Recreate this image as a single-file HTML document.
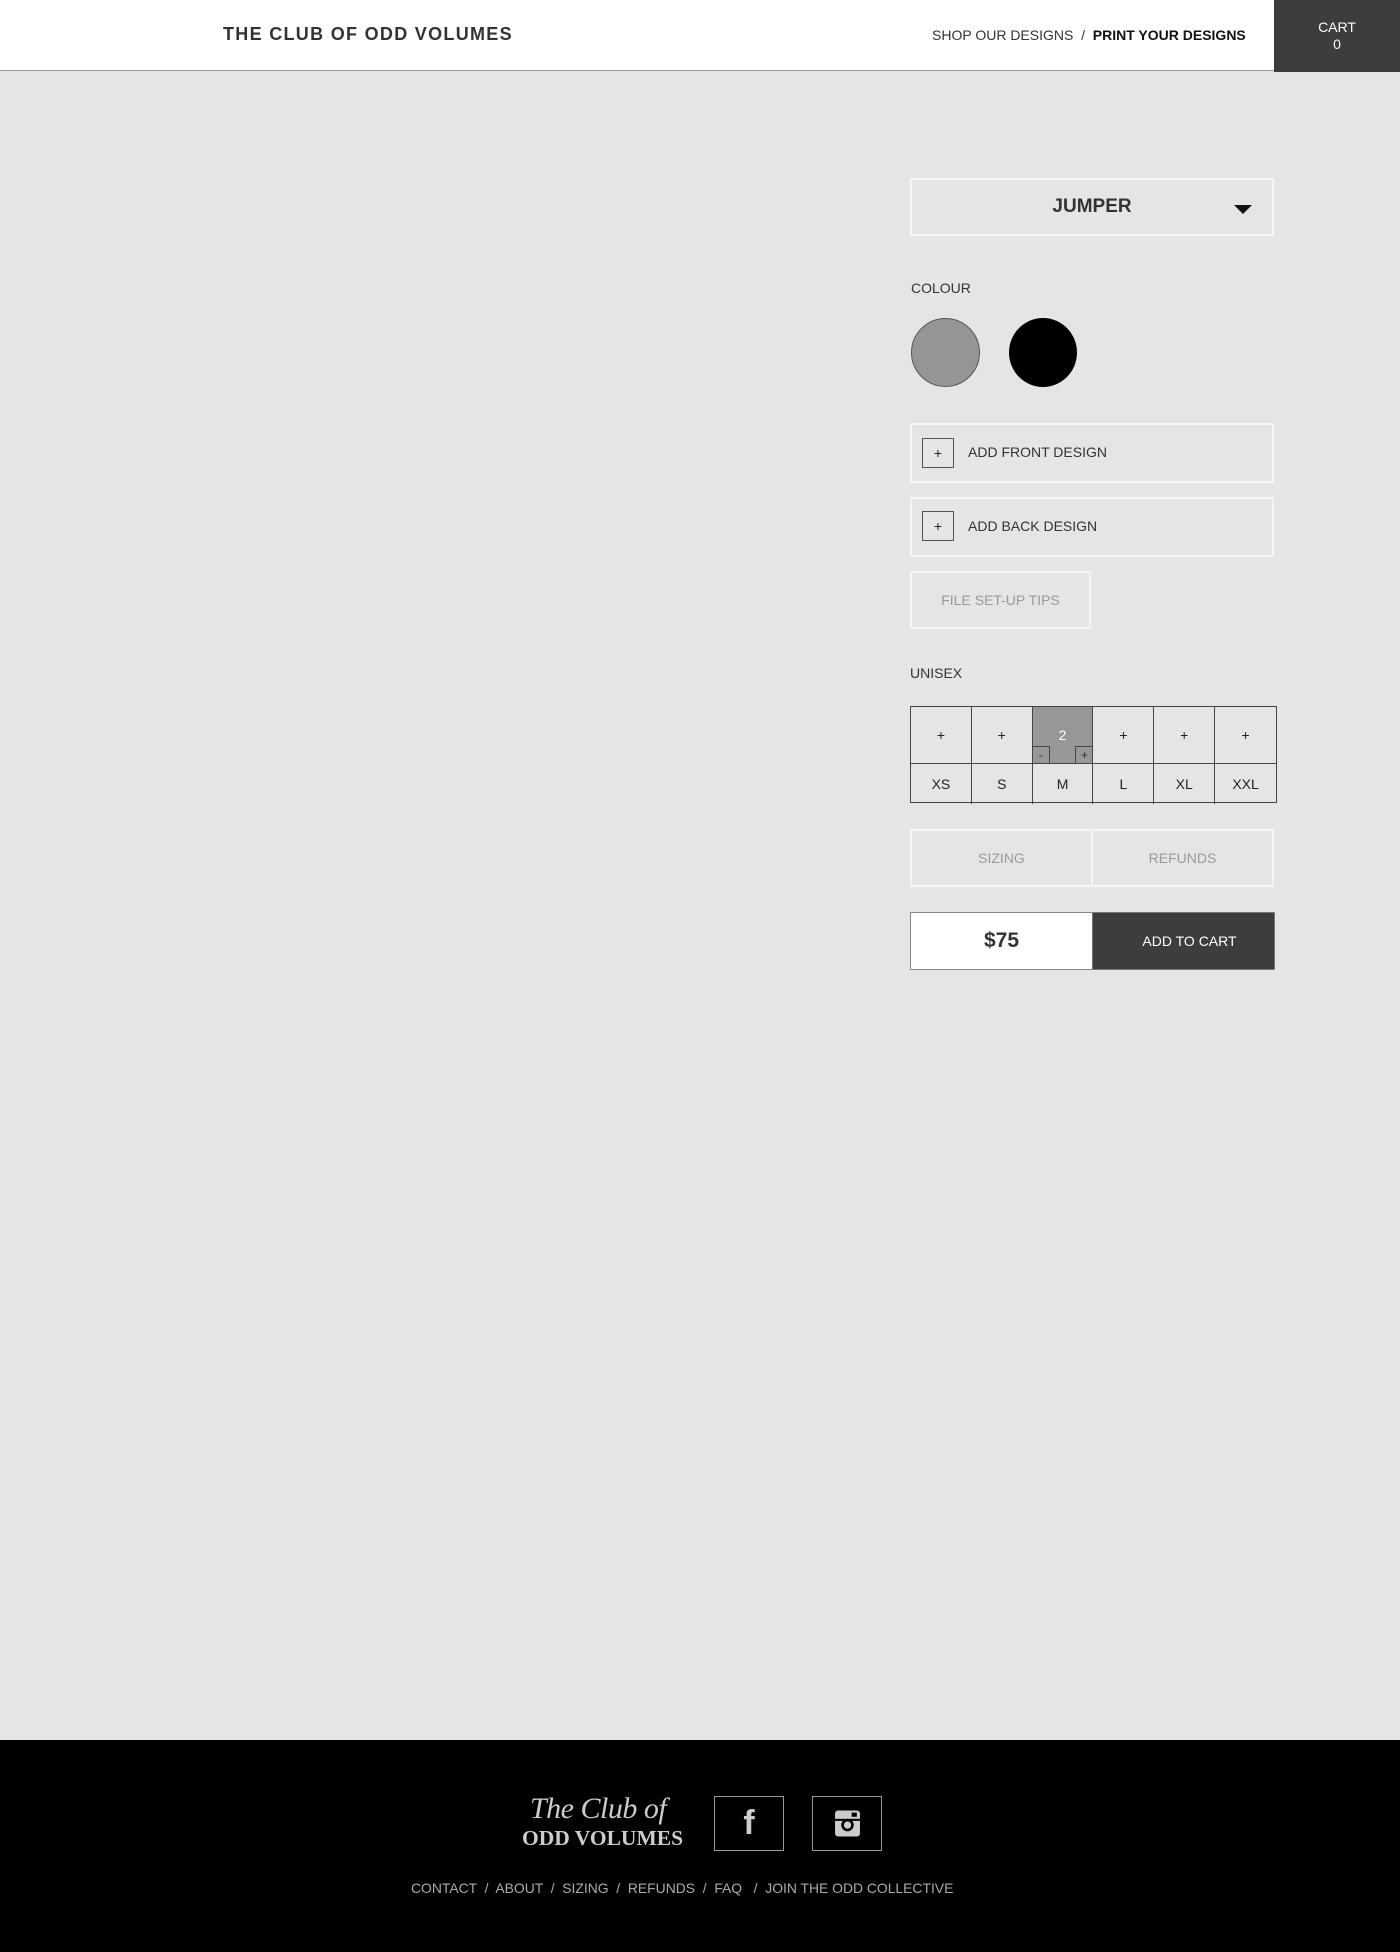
<!DOCTYPE html>
<html><head><meta charset="utf-8"><style>
*{box-sizing:border-box;margin:0;padding:0}
body{width:1400px;height:1952px;background:#e5e5e5;font-family:"Liberation Sans",Arial,sans-serif;position:relative;overflow:hidden;color:#222}
.a{position:absolute}
.hdr{left:0;top:0;width:1400px;height:71px;background:#fff;border-bottom:1px solid #999}
.box{border:2px solid #f5f5f5}
.c{display:flex;align-items:center;justify-content:center}
.grid{left:910px;top:706px;width:367px;height:97px;border:1px solid #444;display:grid;grid-template-columns:repeat(6,1fr);grid-template-rows:57px 40px}
.grid div{border-right:1px solid #444;display:flex;align-items:center;justify-content:center;font-size:14px}
.grid div:nth-child(6n){border-right:none}
.grid div.t{border-bottom:1px solid #444}
</style></head><body>
<div class="a hdr">
<div class="a" style="left:223px;top:24px;font-size:18px;font-weight:bold;letter-spacing:1.3px;color:#333">THE CLUB OF ODD VOLUMES</div>
<div class="a" style="left:932px;top:27px;font-size:14px;color:#333">SHOP OUR DESIGNS &nbsp;/&nbsp; <b style="color:#111">PRINT YOUR DESIGNS</b></div>
<div class="a c" style="left:1274px;top:0;width:126px;height:72px;background:#3d3d3d;color:#fff;font-size:14px;text-align:center;line-height:17px;flex-direction:column">CART<br>0</div>
</div>
<div class="a box c" style="left:910px;top:178px;width:364px;height:58px;font-weight:bold;font-size:19px;color:#333">JUMPER</div>
<div class="a" style="left:1234px;top:205px;width:0;height:0;border-left:9px solid transparent;border-right:9px solid transparent;border-top:9px solid #111"></div>
<div class="a" style="left:911px;top:280px;font-size:14px;color:#333">COLOUR</div>
<div class="a" style="left:911px;top:318px;width:69px;height:69px;border-radius:50%;background:#959595;border:1px solid #555"></div>
<div class="a" style="left:1009px;top:318px;width:68px;height:69px;border-radius:50%;background:#000"></div>
<div class="a box" style="left:910px;top:423px;width:364px;height:60px"></div>
<div class="a c" style="left:922px;top:438px;width:32px;height:30px;border:1px solid #555;font-size:14px">+</div>
<div class="a" style="left:968px;top:444px;font-size:14px;color:#333">ADD FRONT DESIGN</div>
<div class="a box" style="left:910px;top:497px;width:364px;height:60px"></div>
<div class="a c" style="left:922px;top:511px;width:32px;height:30px;border:1px solid #555;font-size:14px">+</div>
<div class="a" style="left:968px;top:518px;font-size:14px;color:#333">ADD BACK DESIGN</div>
<div class="a box c" style="left:910px;top:571px;width:181px;height:58px;font-size:14px;color:#999">FILE SET-UP TIPS</div>
<div class="a" style="left:910px;top:665px;font-size:14px;color:#333">UNISEX</div>
<div class="a grid">
<div class="t">+</div><div class="t">+</div><div class="t" style="background:#979797;color:#fff;position:relative">2<span class="a c" style="left:0;bottom:0;width:17px;height:17px;border:1px solid #444;border-bottom:none;border-left:none;color:#333;font-size:12px">-</span><span class="a c" style="right:0;bottom:0;width:17px;height:17px;border:1px solid #444;border-bottom:none;border-right:none;color:#333;font-size:12px">+</span></div><div class="t">+</div><div class="t">+</div><div class="t">+</div>
<div>XS</div><div>S</div><div>M</div><div>L</div><div>XL</div><div>XXL</div>
</div>
<div class="a box c" style="left:910px;top:829px;width:183px;height:58px;font-size:14px;color:#999">SIZING</div>
<div class="a box c" style="left:1091px;top:829px;width:183px;height:58px;font-size:14px;color:#999">REFUNDS</div>
<div class="a c" style="left:910px;top:912px;width:183px;height:58px;background:#fff;border:1px solid #888;font-size:21px;font-weight:bold;color:#333">$75</div>
<div class="a c" style="left:1092px;top:912px;width:183px;height:58px;background:#3d3d3d;border:1px solid #777;font-size:14px;color:#fff;padding-left:12px">ADD TO CART</div>
<div class="a" style="left:0;top:1740px;width:1400px;height:212px;background:#000"></div>
<div class="a" style="left:530px;top:1792px;font-family:'Liberation Serif',serif;font-style:italic;font-size:30px;color:#ccc;letter-spacing:-0.5px">The Club of</div>
<div class="a" style="left:522px;top:1826px;font-family:'Liberation Serif',serif;font-weight:bold;font-size:21.5px;color:#ccc;white-space:nowrap">ODD VOLUMES</div>
<div class="a c" style="left:714px;top:1796px;width:70px;height:55px;border:1px solid #999;color:#ccc;font-size:34px;font-weight:bold">f</div>
<div class="a c" style="left:812px;top:1796px;width:70px;height:55px;border:1px solid #999"><svg width="27" height="29" viewBox="0 0 26 27"><rect x="1" y="1" width="24" height="25" rx="3" fill="#ccc"/><rect x="1" y="9" width="24" height="2" fill="#000"/><circle cx="13" cy="15" r="6" fill="#000"/><circle cx="13" cy="15" r="3.5" fill="#ccc"/><rect x="17" y="3" width="5" height="4" fill="#000"/></svg></div>
<div class="a" style="left:411px;top:1880px;font-size:13.9px;color:#aaa;white-space:nowrap">CONTACT &nbsp;/&nbsp; ABOUT &nbsp;/&nbsp; SIZING &nbsp;/&nbsp; REFUNDS &nbsp;/&nbsp; FAQ &nbsp;&nbsp;/&nbsp; JOIN THE ODD COLLECTIVE</div>
</body></html>
